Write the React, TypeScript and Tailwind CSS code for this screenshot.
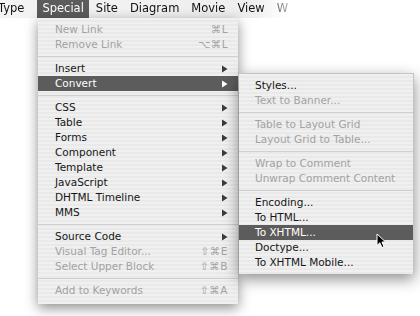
import React from 'react';

type Item =
  | { sep: true }
  | { label: string; disabled?: boolean; sub?: boolean; key?: string; active?: boolean };

const mainItems: Item[] = [
  { label: 'New Link', disabled: true, key: '⌘L' },
  { label: 'Remove Link', disabled: true, key: '⌥⌘L' },
  { sep: true },
  { label: 'Insert', sub: true },
  { label: 'Convert', sub: true, active: true },
  { sep: true },
  { label: 'CSS', sub: true },
  { label: 'Table', sub: true },
  { label: 'Forms', sub: true },
  { label: 'Component', sub: true },
  { label: 'Template', sub: true },
  { label: 'JavaScript', sub: true },
  { label: 'DHTML Timeline', sub: true },
  { label: 'MMS', sub: true },
  { sep: true },
  { label: 'Source Code', sub: true },
  { label: 'Visual Tag Editor...', disabled: true, key: '⇧⌘E' },
  { label: 'Select Upper Block', disabled: true, key: '⇧⌘B' },
  { sep: true },
  { label: 'Add to Keywords', disabled: true, key: '⇧⌘A' },
];

const convertItems: Item[] = [
  { label: 'Styles...' },
  { label: 'Text to Banner...', disabled: true },
  { sep: true },
  { label: 'Table to Layout Grid', disabled: true },
  { label: 'Layout Grid to Table...', disabled: true },
  { sep: true },
  { label: 'Wrap to Comment', disabled: true },
  { label: 'Unwrap Comment Content', disabled: true },
  { sep: true },
  { label: 'Encoding...' },
  { label: 'To HTML...' },
  { label: 'To XHTML...', active: true },
  { label: 'Doctype...' },
  { label: 'To XHTML Mobile...' },
];

// aqua pinstripes
const stripes =
  'bg-[repeating-linear-gradient(180deg,#f0f0f0_0px,#f0f0f0_2px,#e9e9e9_2px,#e9e9e9_4px)]';

const Arrow = ({ white }: { white?: boolean }) => (
  <svg width="6" height="8" viewBox="0 0 6 8">
    <path d="M0 0.5 L5.5 4 L0 7.5 Z" fill={white ? '#ffffff' : '#3a3a3a'} />
  </svg>
);

const MenuRows = ({ items, left }: { items: Item[]; left: string }) => (
  <>
    {items.map((it, i) =>
      'sep' in it ? (
        <div key={i} className="h-[9px] flex items-center">
          <div className="h-px w-full bg-[#d0d0d0]" />
        </div>
      ) : (
        <div
          key={i}
          className={`h-[15px] flex items-center justify-between pr-[10px] ${left} ${
            it.active ? 'bg-[#5c5c5c] text-white' : it.disabled ? 'text-[#a2a2a2]' : 'text-[#161616]'
          }`}
        >
          <span>{it.label}</span>
          {it.sub && <Arrow white={it.active} />}
          {it.key && <span className="tracking-[0.5px]">{it.key}</span>}
        </div>
      )
    )}
  </>
);

export default function App() {
  const bar = ['Site', 'Diagram', 'Movie', 'View', 'W'];
  return (
    <div className="relative w-[420px] h-[316px] bg-white overflow-hidden font-['DejaVu_Sans',sans-serif]">
      <div className="h-[18px] bg-[linear-gradient(to_right,#f4f4f4_0%,#eeeeee_60%,rgba(255,255,255,0)_70%)] shadow-[0_2px_4px_rgba(0,0,0,0.18)] [mask-image:linear-gradient(to_right,black_62%,transparent_72%)]">
        <div className="flex items-stretch h-full text-[11.5px] text-[#111] -ml-[8px]">
          <div className="flex items-center pl-[6px] pr-[11px] mr-[2px]">Type</div>
          <div className="flex items-center px-[5px] mr-[2px] bg-[#5c5c5c] text-white">Special</div>
          {bar.map(b => (
            <div key={b} className="flex items-center px-[5px] mr-[2px]">
              {b}
            </div>
          ))}
        </div>
      </div>

      <div
        className={`absolute left-[38px] top-[18px] w-[200px] pt-[4px] pb-[6px] text-[10.5px] ${stripes} shadow-[0_4px_12px_rgba(0,0,0,0.45)]`}
      >
        <MenuRows items={mainItems} left="pl-[17px]" />
      </div>

      <div
        className={`absolute left-[239px] top-[73px] w-[175px] pt-[4px] pb-[4px] text-[10.5px] ${stripes} border-t border-r border-[#c4c4c4] shadow-[0_5px_14px_rgba(0,0,0,0.45)]`}
      >
        <MenuRows items={convertItems} left="pl-[16px]" />
      </div>

      <svg className="absolute left-[376px] top-[233px]" width="12" height="16" viewBox="0 0 12 16">
        <path
          d="M1 1 L1 12.5 L3.8 9.8 L6 14.5 L8 13.6 L5.9 9 L9.6 9 Z"
          fill="#000"
          stroke="#fff"
          strokeWidth="1"
        />
      </svg>
    </div>
  );
}
